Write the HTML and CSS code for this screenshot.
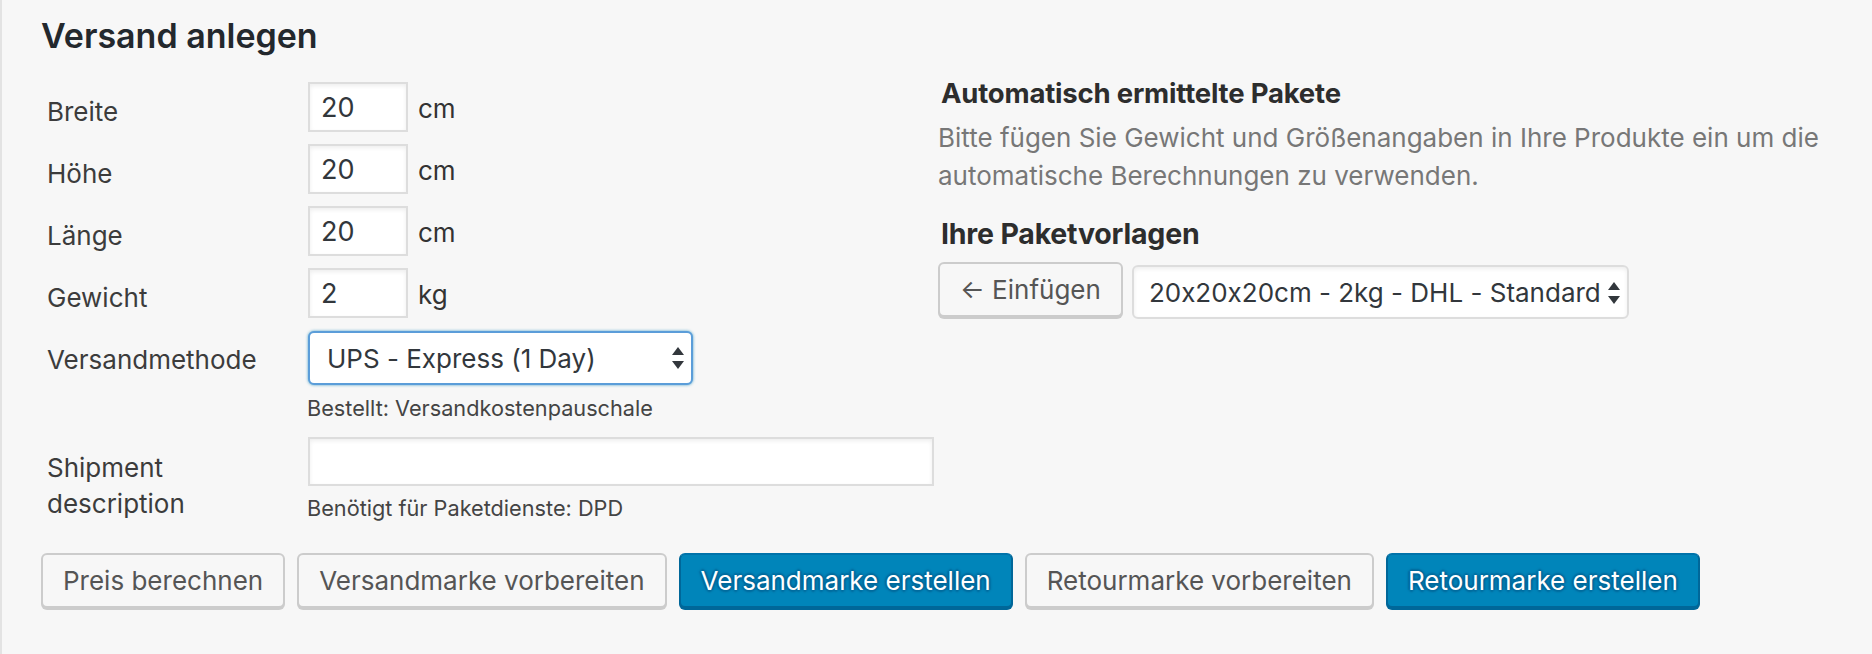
FILE: index.html
```html
<!DOCTYPE html>
<html lang="de">
<head>
<meta charset="utf-8">
<title>Versand anlegen</title>
<link rel="stylesheet" href="styles.css">
</head>
<body>
<div class="panel">
  <h3 class="title">Versand anlegen</h3>
  <div class="main">
    <div class="left">
      <div class="form-grid">
        <label class="lbl">Breite</label>
        <div class="field"><input class="num" type="text" value="20"><span class="unit">cm</span></div>

        <label class="lbl">Höhe</label>
        <div class="field"><input class="num" type="text" value="20"><span class="unit">cm</span></div>

        <label class="lbl">Länge</label>
        <div class="field"><input class="num" type="text" value="20"><span class="unit">cm</span></div>

        <label class="lbl">Gewicht</label>
        <div class="field"><input class="num" type="text" value="2"><span class="unit">kg</span></div>

        <label class="lbl">Versandmethode</label>
        <div class="field-col">
          <div class="select-wrap method">
            <select class="select focus"><option>UPS - Express (1 Day)</option></select>
            <svg class="arrows" viewBox="0 0 12 22" width="12" height="22"><path d="M6 0 L12 8 L0 8 Z M0 14 L12 14 L6 22 Z" fill="#32373c"/></svg>
          </div>
          <p class="desc">Bestellt: Versandkostenpauschale</p>
        </div>

        <label class="lbl lbl-ship">Shipment description</label>
        <div class="field-col ship">
          <input class="text" type="text" value="">
          <p class="desc desc-ship">Benötigt für Paketdienste: DPD</p>
        </div>
      </div>
    </div>
    <div class="right">
      <h4 class="sub">Automatisch ermittelte Pakete</h4>
      <p class="info">Bitte fügen Sie Gewicht und Größenangaben in Ihre Produkte ein um die automatische Berechnungen zu verwenden.</p>
      <h4 class="sub sub2">Ihre Paketvorlagen</h4>
      <div class="tpl-row">
        <button class="btn">← Einfügen</button>
        <div class="select-wrap tpl">
          <select class="select plain"><option>20x20x20cm - 2kg - DHL - Standard</option></select>
          <svg class="arrows" viewBox="0 0 12 22" width="12" height="22"><path d="M6 0 L12 8 L0 8 Z M0 14 L12 14 L6 22 Z" fill="#32373c"/></svg>
        </div>
      </div>
    </div>
  </div>
  <div class="actions">
    <button class="btn">Preis berechnen</button>
    <button class="btn">Versandmarke vorbereiten</button>
    <button class="btn primary">Versandmarke erstellen</button>
    <button class="btn">Retourmarke vorbereiten</button>
    <button class="btn primary">Retourmarke erstellen</button>
  </div>
</div>
</body>
</html>
```

FILE: styles.css
```css
html, body {
  margin: 0;
  padding: 0;
  background: #f7f7f7;
}

body {
  font-family: Inter, "Noto Sans", "Liberation Sans", sans-serif;
  font-feature-settings: "calt" 0;
  color: #444;
}

.panel {
  min-height: 654px;
  box-sizing: border-box;
  border-left: 2px solid #e3e3e3;
  padding: 15px 0 0 39px;
}

.title {
  margin: 0;
  font-size: 34px;
  line-height: 41px;
  font-weight: 600;
  color: #23282d;
}

.main {
  display: flex;
  margin-top: 22px;
}

.left {
  width: 893px;
  padding-top: 4px;
  flex: none;
}

.form-grid {
  display: grid;
  grid-template-columns: 267px 626px;
  row-gap: 12px;
}

.lbl {
  font-size: 26px;
  line-height: 36px;
  padding: 12px 20px 0 6px;
  color: #3c3c3c;
}

.lbl-ship {
  padding-top: 15px;
}

.field {
  display: flex;
  align-items: center;
}

.num {
  width: 100px;
  height: 50px;
  box-sizing: border-box;
  border: 2px solid #ddd;
  box-shadow: inset 0 2px 4px rgba(0, 0, 0, 0.07);
  background: #fff;
  font-family: inherit;
  font-size: 27px;
  color: #32373c;
  padding: 0 11px;
  margin: 0;
  outline: none;
}

.unit {
  margin-left: 10px;
  font-size: 26px;
  color: #333;
  padding-top: 2px;
}

.field-col {
  display: flex;
  flex-direction: column;
  align-items: flex-start;
}

.select-wrap {
  position: relative;
}

.select {
  appearance: none;
  -webkit-appearance: none;
  box-sizing: border-box;
  margin: 0;
  background: #fff;
  font-family: inherit;
  font-feature-settings: "calt" 0;
  color: #32373c;
  border-radius: 6px;
  outline: none;
}

.method {
  margin-top: 1px;
}

.focus {
  width: 385px;
  height: 54px;
  font-size: 26px;
  padding: 0 40px 0 17px;
  border: 2px solid #5b9dd9;
  box-shadow: 0 0 3px rgba(30, 140, 190, 0.8);
}

.arrows {
  position: absolute;
  right: 9px;
  top: 50%;
  margin-top: -11px;
  pointer-events: none;
}

.desc {
  margin: 8px 0 0 -1px;
  font-size: 21.7px;
  line-height: 30px;
  color: #444;
}

.desc-ship {
  margin-top: 7px;
}

.text {
  width: 626px;
  height: 49px;
  box-sizing: border-box;
  border: 2px solid #ddd;
  box-shadow: inset 0 2px 4px rgba(0, 0, 0, 0.07);
  background: #fff;
  margin: 2px 0 0;
  outline: none;
}

.right {
  flex: 1;
  padding: 0 30px 0 4px;
}

.sub {
  margin: 0;
  padding-left: 3px;
  font-size: 27.5px;
  line-height: 30px;
  font-weight: 700;
  color: #2d2d2d;
  letter-spacing: -0.2px;
}

.info {
  margin: 11px 0 0;
  font-size: 26px;
  line-height: 38px;
  color: #777;
}

.sub2 {
  margin-top: 24px;
  font-size: 28.5px;
}

.tpl-row {
  display: flex;
  align-items: flex-start;
  gap: 9px;
  margin-top: 13px;
}

.plain {
  width: 497px;
  height: 54px;
  margin-top: 3px;
  font-size: 26px;
  padding: 0 22px 0 15px;
  border: 2px solid #ddd;
  box-shadow: inset 0 2px 4px rgba(0, 0, 0, 0.07);
}

.tpl .arrows {
  margin-top: -9px;
}

.btn {
  height: 55px;
  box-sizing: border-box;
  padding: 0 20px;
  margin: 0;
  border: 2px solid #ccc;
  border-radius: 6px;
  background: #f7f7f7;
  box-shadow: 0 2px 0 #ccc;
  font-family: inherit;
  font-size: 26px;
  color: #555;
  white-space: nowrap;
  cursor: pointer;
}

.primary {
  background: #0085ba;
  border-color: #0073aa #006799 #006799;
  box-shadow: 0 2px 0 #006799;
  color: #fff;
  text-shadow: 0 -2px 2px #006799, 2px 0 2px #006799, 0 2px 2px #006799, -2px 0 2px #006799;
}

.actions {
  display: flex;
  gap: 12px;
  margin-top: 30px;
}
```
